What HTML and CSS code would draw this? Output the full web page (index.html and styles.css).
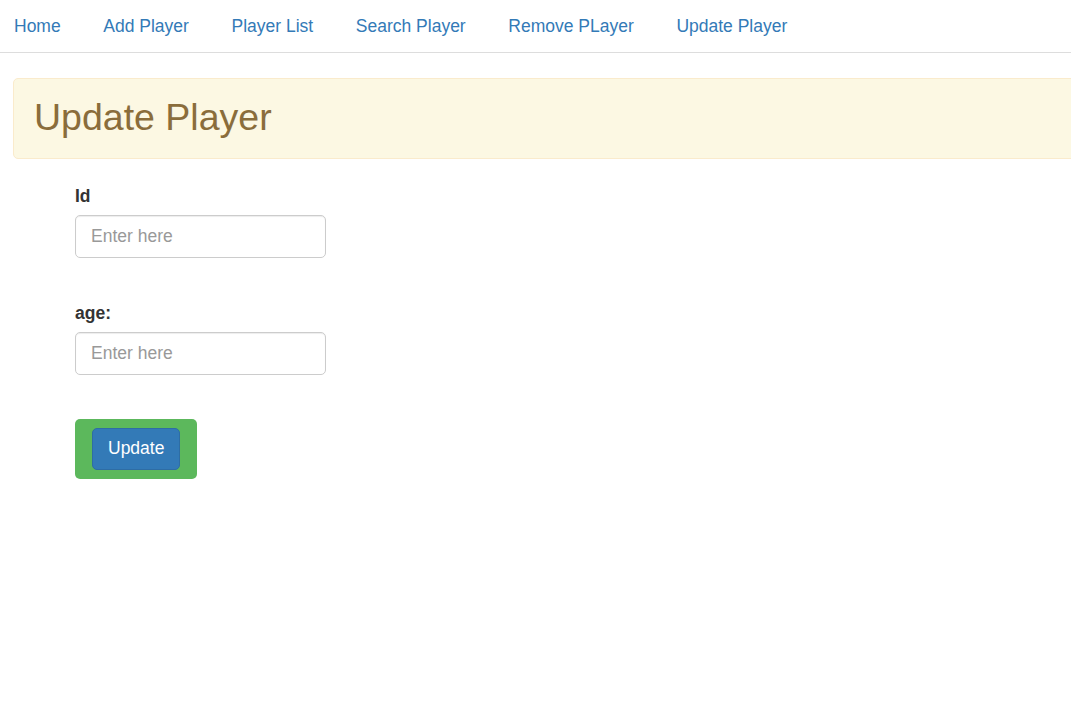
FILE: index.html
```html
<!DOCTYPE html>
<html lang="en">
<head>
<meta charset="utf-8">
<title>Update Player</title>
<link rel="stylesheet" href="styles.css">
</head>
<body>
<nav class="topnav">
  <ul class="nav-list">
    <li><a href="#" class="nav-link">Home</a></li>
    <li><a href="#" class="nav-link">Add Player</a></li>
    <li><a href="#" class="nav-link">Player List</a></li>
    <li><a href="#" class="nav-link">Search Player</a></li>
    <li><a href="#" class="nav-link">Remove PLayer</a></li>
    <li><a href="#" class="nav-link">Update Player</a></li>
  </ul>
</nav>
<div class="banner">
  <h2 class="banner-title">Update Player</h2>
</div>
<form class="player-form">
  <div class="form-group">
    <label class="field-label" for="pid">Id</label>
    <input class="field-input" id="pid" type="text" placeholder="Enter here">
  </div>
  <div class="form-group second">
    <label class="field-label" for="age">age:</label>
    <input class="field-input" id="age" type="text" placeholder="Enter here">
  </div>
  <div class="submit-wrap">
    <button type="button" class="btn-update">Update</button>
  </div>
</form>
</body>
</html>
```
FILE: styles.css
```css
html, body {
  margin: 0;
  padding: 0;
  overflow: hidden;
  background: #fff;
}
body {
  font-family: "Liberation Sans", Arial, Helvetica, sans-serif;
  font-size: 17.5px;
  line-height: 25px;
  color: #333;
}
.topnav {
  border-bottom: 1px solid #ddd;
}
.nav-list {
  list-style: none;
  margin: 0;
  padding: 0 0 0 14px;
  display: flex;
  gap: 42.6px;
}
.nav-link {
  display: block;
  padding: 14px 0 13px;
  color: #337ab7;
  text-decoration: none;
  font-size: 17.5px;
  line-height: 25px;
}
.banner {
  margin: 25px -20px 0 13px;
  padding: 18px 20px 20px;
  background: #fcf8e3;
  border: 1px solid #faebcc;
  border-radius: 5px;
}
.banner-title {
  margin: 0;
  font-size: 37.5px;
  line-height: 41px;
  font-weight: 500;
  color: #8a6d3b;
}
.player-form {
  margin: 25px 0 0 75px;
}
.form-group.second {
  margin-top: 43px;
}
.field-label {
  display: block;
  font-weight: bold;
  font-size: 17.5px;
  line-height: 25px;
  margin-bottom: 6px;
  color: #333;
}
.field-input {
  display: block;
  box-sizing: border-box;
  width: 251px;
  height: 43px;
  margin: 0;
  padding: 0 15px;
  border: 1px solid #ccc;
  border-radius: 5px;
  font-family: inherit;
  font-size: 17.5px;
  color: #555;
  box-shadow: inset 0 1px 1px rgba(0,0,0,.075);
  outline: none;
}
.field-input::placeholder {
  color: #999;
}
.submit-wrap {
  display: inline-block;
  margin-top: 44px;
  padding: 9px 17px;
  background: #5cb85c;
  border-radius: 5px;
}
.btn-update {
  display: block;
  box-sizing: border-box;
  height: 42px;
  margin: 0;
  padding: 0 15px 1px;
  background: #337ab7;
  border: 1px solid #2e6da4;
  border-radius: 5px;
  color: #fff;
  font-family: inherit;
  font-size: 17.5px;
  line-height: 25px;
}
```
